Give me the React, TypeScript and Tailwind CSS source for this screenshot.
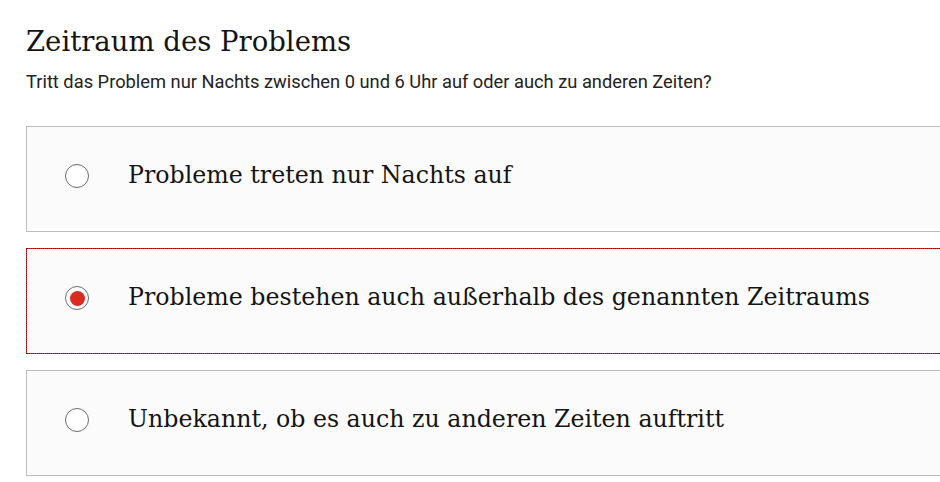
import React from "react";

const options = [
  "Probleme treten nur Nachts auf",
  "Probleme bestehen auch außerhalb des genannten Zeitraums",
  "Unbekannt, ob es auch zu anderen Zeiten auftritt",
];

function Radio({ checked }: { checked: boolean }) {
  return (
    <span className="flex h-[24px] w-[24px] shrink-0 items-center justify-center rounded-full border border-[#6b6b6b] bg-white">
      {checked && <span className="h-[15px] w-[15px] rounded-full bg-[#db2a1f]" />}
    </span>
  );
}

export default function App() {
  const selected = 1;
  return (
    <div className="min-h-[482px] w-[940px] overflow-hidden bg-white pl-[26px] pt-[22px]">
      <h1
        className="text-[27.5px] leading-[38px] text-[#141414]"
        style={{ fontFamily: '"DejaVu Serif", serif' }}
      >
        Zeitraum des Problems
      </h1>
      <p
        className="mt-[11px] text-[18.3px] leading-[22px] text-[#222]"
        style={{ fontFamily: 'Roboto, sans-serif' }}
      >
        Tritt das Problem nur Nachts zwischen 0 und 6 Uhr auf oder auch zu anderen Zeiten?
      </p>
      <div className="mt-[33px] flex w-[930px] flex-col gap-[16px]">
        {options.map((o, i) => {
          const sel = i === selected;
          return (
            <div key={i} className={sel ? "bg-[#d42a20]" : ""}>
              <label
                className={
                  "flex h-[106px] items-center bg-[#fbfbfb] bg-clip-padding pb-[6px] pl-[38px] " +
                  (sel ? "border border-dotted border-[#5a1a14]" : "border border-[#bdbdbd]")
                }
              >
                <Radio checked={sel} />
                <span
                  className="ml-[39px] text-[23.7px] text-[#141414]"
                  style={{ fontFamily: '"DejaVu Serif", serif' }}
                >
                  {o}
                </span>
              </label>
            </div>
          );
        })}
      </div>
    </div>
  );
}
